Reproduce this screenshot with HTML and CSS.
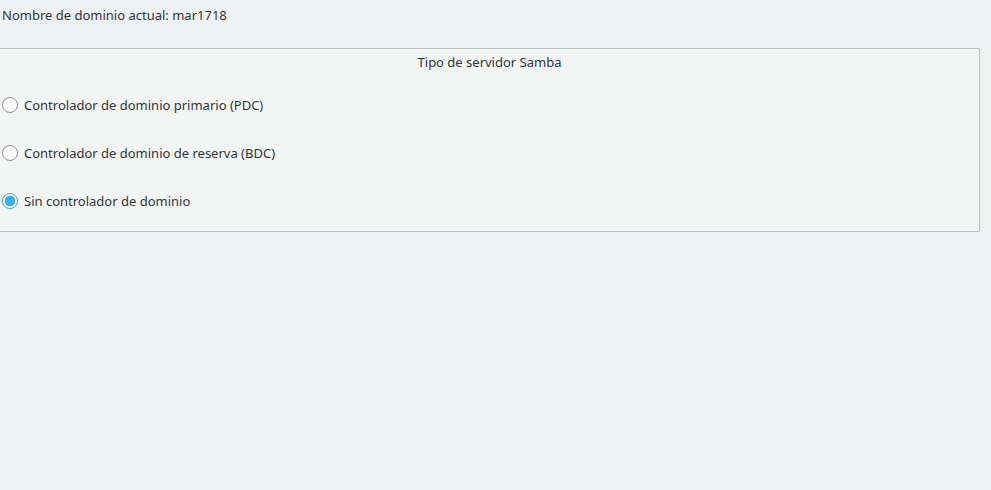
FILE: index.html
```html
<!DOCTYPE html>
<html lang="es">
<head>
<meta charset="utf-8">
<link rel="stylesheet" href="styles.css">
</head>
<body>
<div class="page">
  <div class="domain">Nombre de dominio actual: mar1718</div>
  <fieldset class="group">
    <div class="title">Tipo de servidor Samba</div>
    <div class="options">
      <label class="opt"><span class="radio"></span><span>Controlador de dominio primario (PDC)</span></label>
      <label class="opt"><span class="radio"></span><span>Controlador de dominio de reserva (BDC)</span></label>
      <label class="opt"><span class="radio checked"></span><span>Sin controlador de dominio</span></label>
    </div>
  </fieldset>
</div>
</body>
</html>
```
FILE: styles.css
```css
html, body {
  margin: 0;
  padding: 0;
  background: #eff0f1;
  width: 991px;
  height: 490px;
  overflow: hidden;
}
body {
  font-family: "Noto Sans", "Open Sans", sans-serif;
  font-size: 13px;
  color: #31363b;
}
.page {
  display: flex;
  flex-direction: column;
}
.domain {
  line-height: 18px;
  padding: 6px 0 0 2px;
  height: 18px;
}
.group {
  margin: 24px 0 0 -1px;
  padding: 0;
  width: 979px;
  height: 182px;
  border: 1px solid #bdbfc0;
  border-radius: 2px;
  background: #f3f4f4;
  display: flex;
  flex-direction: column;
  min-width: 0;
}
.title {
  text-align: center;
  line-height: 18px;
  padding-top: 4px;
}
.options {
  display: flex;
  flex-direction: column;
  padding-top: 10px;
}
.opt {
  display: flex;
  align-items: center;
  height: 48px;
  padding-left: 2px;
  gap: 6px;
}
.radio {
  box-sizing: border-box;
  width: 16px;
  height: 16px;
  border-radius: 50%;
  border: 1px solid #8f9294;
  background: #fcfcfc;
  flex: none;
}
.radio.checked {
  border-color: #3daee9;
  background: radial-gradient(circle, #3daee9 0, #3daee9 5px, #fcfcfc 5.6px);
}
```
